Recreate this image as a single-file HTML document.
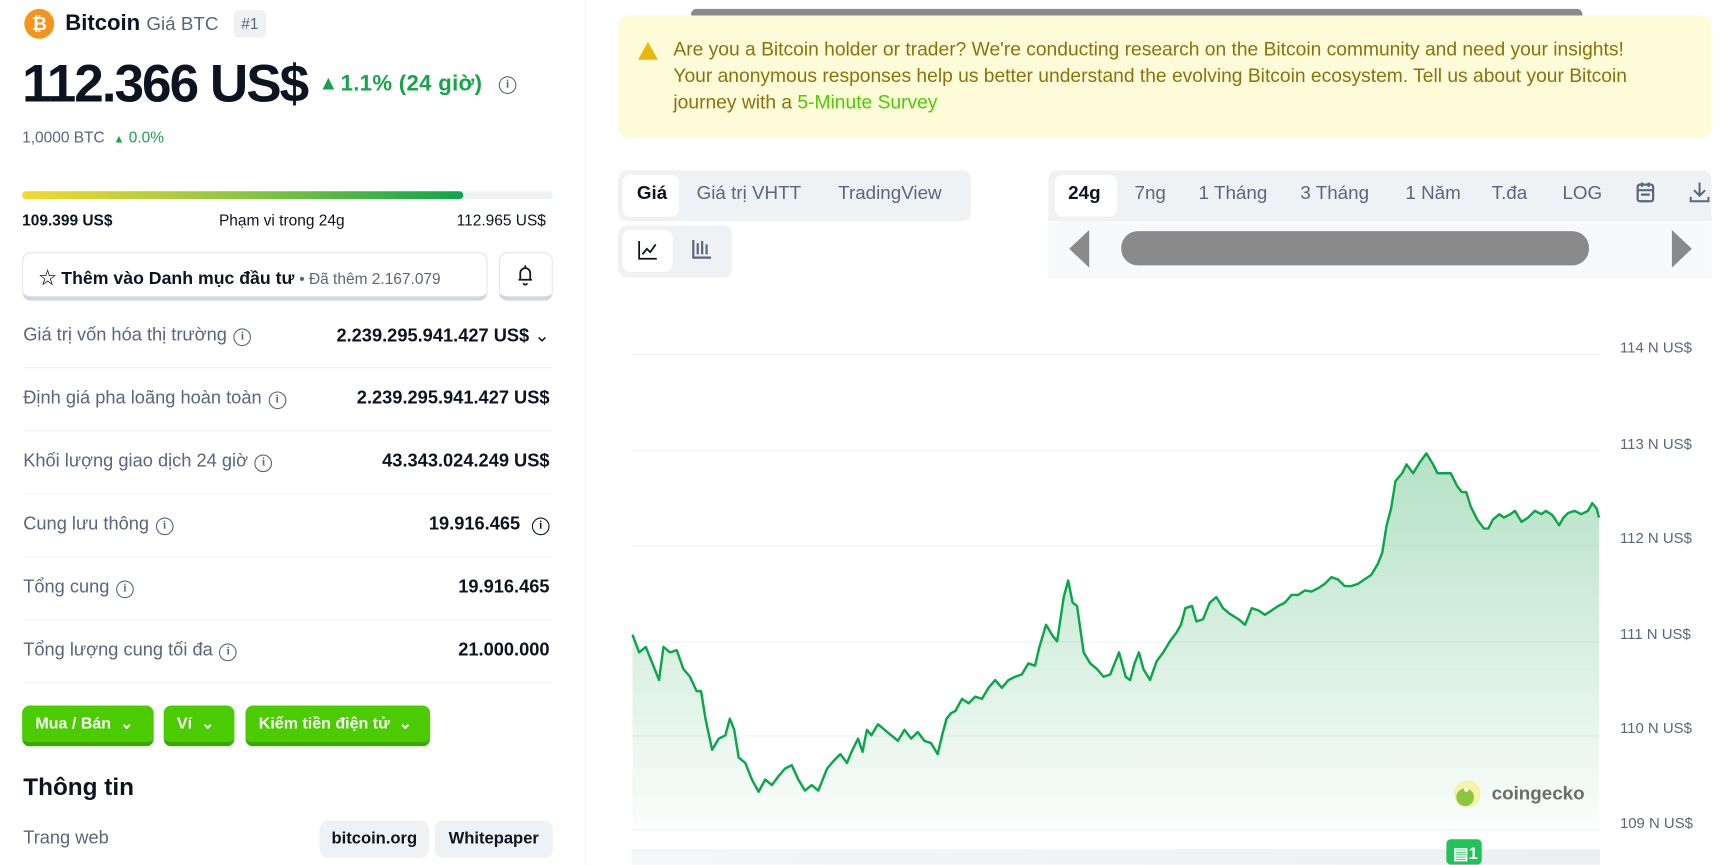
<!DOCTYPE html>
<html><head><meta charset="utf-8"><style>
*{margin:0;padding:0;box-sizing:border-box}
html,body{width:1725px;height:865px;overflow:hidden;background:#fff}
#w{position:absolute;left:0;top:0;width:1560px;height:782px;transform:scale(1.10577);transform-origin:0 0;font-family:"Liberation Sans","Noto Sans CJK JP",sans-serif;color:#0d1421}
.a{position:absolute;white-space:nowrap}
.row{position:absolute;left:21px;width:478px;height:57px;border-bottom:1px solid #eff2f5;font-size:16.5px}
.row .l{position:absolute;left:0;top:18px;color:#58667e}
.row .r{position:absolute;right:2px;top:18px;font-weight:bold;color:#0d1421}
.i{display:inline-block;width:16px;height:16px;border:1.5px solid #58667e;border-radius:50%;font-size:10px;line-height:13px;text-align:center;font-weight:bold;vertical-align:1px;margin-left:6px;color:#58667e;font-family:"Liberation Serif",serif}
.gb{position:absolute;top:638px;height:37px;background:#4bcc00;border-bottom:4px solid #3aa800;border-radius:7px;color:#fff;font-weight:bold;font-size:14.5px;padding:9px 12px 0}
.tab{position:absolute;font-size:17px;color:#58667e}
.grid{position:absolute;left:571px;width:876px;height:1px;background:#eff2f5}
.yl{position:absolute;left:1465px;font-size:13.5px;color:#58667e}
</style></head><body><div id="w">
<div class="a" style="left:529px;top:0;width:1px;height:782px;background:#eff2f5"></div>
<div class="a" style="left:22px;top:8px;width:27px;height:27px;border-radius:50%;background:#f7931a;color:#fff;font-weight:bold;font-size:17px;text-align:center;line-height:27px">₿</div>
<div class="a" style="left:59px;top:10px;font-size:20px;font-weight:bold">Bitcoin <span style="font-weight:normal;color:#58667e;font-size:17px">Giá BTC</span></div>
<div class="a" style="left:211px;top:9px;width:30px;height:25px;background:#eff2f5;border-radius:6px;font-size:14px;text-align:center;line-height:25px;color:#58667e">#1</div>
<div class="a" style="left:20px;top:49px;font-size:48px;font-weight:bold;letter-spacing:-1.8px">112.366 US$</div>
<div class="a" style="left:288px;top:65px;font-size:18px;font-weight:bold;color:#16a34a">▲</div>
<div class="a" style="left:308px;top:65px;font-size:20px;font-weight:bold;color:#16a34a;letter-spacing:0.3px">1.1% (24 giờ)</div>
<div class="a" style="left:451px;top:67px"><span class="i" style="margin:0">i</span></div>
<div class="a" style="left:20px;top:116px;font-size:14px;color:#58667e">1,0000 BTC <span style="color:#16a34a;font-size:10px;margin-left:4px">▲</span><span style="color:#16a34a"> 0.0%</span></div>
<div class="a" style="left:20px;top:173px;width:480px;height:7px;border-radius:4px;background:#eff2f5"></div>
<div class="a" style="left:20px;top:173px;width:399px;height:7px;border-radius:4px;background:linear-gradient(90deg,#f5d92e,#8cc63f 50%,#0aa64a)"></div>
<div class="a" style="left:20px;top:191px;font-size:14px;font-weight:bold;color:#0d1421">109.399 US$</div>
<div class="a" style="left:198px;top:191px;font-size:14px;color:#0d1421">Phạm vi trong 24g</div>
<div class="a" style="left:413px;top:191px;font-size:14px;color:#0d1421">112.965 US$</div>
<div class="a" style="left:20px;top:228px;width:421px;height:44px;border:1.5px solid #dfe3e8;border-bottom:4px solid #cfd6e4;border-radius:8px;padding:9px 0 0 14px;font-size:16px;font-weight:bold">☆ Thêm vào Danh mục đầu tư <span style="font-weight:normal;font-size:14px;color:#58667e">• Đã thêm 2.167.079</span></div>
<div class="a" style="left:451px;top:228px;width:49px;height:44px;border:1.5px solid #dfe3e8;border-bottom:4px solid #cfd6e4;border-radius:8px">
<svg width="46" height="38" viewBox="0 0 46 38"><path d="M17 24h12M18.5 24v-6a4.5 4.5 0 0 1 9 0v6M23 11v2M21.5 27a1.5 1.5 0 0 0 3 0" fill="none" stroke="#0d1421" stroke-width="1.6"/></svg></div>
<div class="row" style="top:276px"><span class="l">Giá trị vốn hóa thị trường<span class="i">i</span></span><span class="r">2.239.295.941.427 US$ <span style="font-weight:normal;color:#0d1421">⌄</span></span></div>
<div class="row" style="top:333px"><span class="l">Định giá pha loãng hoàn toàn<span class="i">i</span></span><span class="r">2.239.295.941.427 US$</span></div>
<div class="row" style="top:390px"><span class="l">Khối lượng giao dịch 24 giờ<span class="i">i</span></span><span class="r">43.343.024.249 US$</span></div>
<div class="row" style="top:447px"><span class="l">Cung lưu thông<span class="i">i</span></span><span class="r">19.916.465 <span class="i" style="border-color:#0d1421;color:#0d1421">i</span></span></div>
<div class="row" style="top:504px"><span class="l">Tổng cung<span class="i">i</span></span><span class="r">19.916.465</span></div>
<div class="row" style="top:561px"><span class="l">Tổng lượng cung tối đa<span class="i">i</span></span><span class="r">21.000.000</span></div>
<div class="gb" style="left:20px;width:119px">Mua / Bán &nbsp;⌄</div>
<div class="gb" style="left:148px;width:64px">Ví &nbsp;⌄</div>
<div class="gb" style="left:222px;width:167px">Kiếm tiền điện tử &nbsp;⌄</div>
<div class="a" style="left:21px;top:699px;font-size:22px;font-weight:bold">Thông tin</div>
<div class="a" style="left:21px;top:749px;font-size:16.5px;color:#58667e">Trang web</div>
<div class="a" style="left:289px;top:742px;width:99px;height:34px;background:#eff2f5;border-radius:8px;font-size:15px;font-weight:bold;text-align:center;line-height:34px">bitcoin.org</div>
<div class="a" style="left:393px;top:742px;width:107px;height:34px;background:#eff2f5;border-radius:8px;font-size:15px;font-weight:bold;text-align:center;line-height:34px">Whitepaper</div>
<div class="a" style="left:625px;top:8px;width:806px;height:10px;background:#8a8a8a;border-radius:5px"></div>
<div class="a" style="left:559px;top:14px;width:989px;height:111px;background:#fefbd8;border-radius:10px"></div>
<div class="a" style="left:577px;top:38px;width:0;height:0;border-left:9px solid transparent;border-right:9px solid transparent;border-bottom:16px solid #e7b80a"></div>
<div class="a" style="left:609px;top:32px;font-size:17.4px;line-height:24px;color:#8c720c;white-space:normal;width:880px">Are you a Bitcoin holder or trader? We're conducting research on the Bitcoin community and need your insights! Your anonymous responses help us better understand the evolving Bitcoin ecosystem. Tell us about your Bitcoin journey with a <span style="color:#4bcc00">5-Minute Survey</span></div>
<div class="a" style="left:559px;top:154px;width:319px;height:46px;background:#eff2f5;border-radius:8px"></div>
<div class="a" style="left:563px;top:158px;width:51px;height:38px;background:#fff;border-radius:7px"></div>
<div class="tab" style="left:576px;top:165px;color:#0d1421;font-weight:bold">Giá</div>
<div class="tab" style="left:630px;top:165px">Giá trị VHTT</div>
<div class="tab" style="left:758px;top:165px">TradingView</div>
<div class="a" style="left:559px;top:204px;width:103px;height:47px;background:#eff2f5;border-radius:8px"></div>
<div class="a" style="left:563px;top:208px;width:45px;height:38px;background:#fff;border-radius:7px"></div>
<svg class="a" style="left:576px;top:216px" width="20" height="20" viewBox="0 0 20 20"><path d="M2 2v16h16M5 14l4-5 3 3 5-7" fill="none" stroke="#0d1421" stroke-width="1.6"/></svg>
<svg class="a" style="left:625px;top:215px" width="20" height="20" viewBox="0 0 20 20"><path d="M2 2v16h16M6 5v10M10 3v12M14 6v9" fill="none" stroke="#58667e" stroke-width="2"/></svg>
<div class="a" style="left:948px;top:154px;width:600px;height:46px;background:#eff2f5;border-radius:8px 8px 0 0"></div>
<div class="a" style="left:954px;top:158px;width:56px;height:38px;background:#fff;border-radius:7px"></div>
<div class="tab" style="left:966px;top:165px;color:#0d1421;font-weight:bold">24g</div>
<div class="tab" style="left:1026px;top:165px">7ng</div>
<div class="tab" style="left:1084px;top:165px">1 Tháng</div>
<div class="tab" style="left:1176px;top:165px">3 Tháng</div>
<div class="tab" style="left:1271px;top:165px">1 Năm</div>
<div class="tab" style="left:1349px;top:165px">T.đa</div>
<div class="tab" style="left:1413px;top:165px">LOG</div>
<svg class="a" style="left:1479px;top:164px" width="18" height="20" viewBox="0 0 18 20"><rect x="2" y="3" width="14" height="15" rx="2" fill="none" stroke="#58667e" stroke-width="2"/><path d="M2 8h14M6 1v4M12 1v4M5 12h8" stroke="#58667e" stroke-width="2"/></svg>
<svg class="a" style="left:1527px;top:163px" width="20" height="22" viewBox="0 0 20 22"><path d="M10 2v12M5 9l5 5 5-5M2 15v4h16v-4" fill="none" stroke="#58667e" stroke-width="1.8"/></svg>
<div class="a" style="left:948px;top:200px;width:600px;height:52px;background:#f8f9fa"></div>
<div class="a" style="left:1014px;top:209px;width:423px;height:31px;background:#8a8a8a;border-radius:15px"></div>
<div class="a" style="left:967px;top:208px;width:0;height:0;border-top:17px solid transparent;border-bottom:17px solid transparent;border-right:18px solid #8a8a8a"></div>
<div class="a" style="left:1512px;top:208px;width:0;height:0;border-top:17px solid transparent;border-bottom:17px solid transparent;border-left:18px solid #8a8a8a"></div>
<div class="grid" style="top:320px"></div><div class="grid" style="top:407px"></div><div class="grid" style="top:493px"></div><div class="grid" style="top:580px"></div><div class="grid" style="top:665px"></div><div class="grid" style="top:750px"></div>
<div class="yl" style="top:307px">114 N US$</div><div class="yl" style="top:394px">113 N US$</div><div class="yl" style="top:479px">112 N US$</div><div class="yl" style="top:566px">111 N US$</div><div class="yl" style="top:651px">110 N US$</div><div class="yl" style="top:737px">109 N US$</div>
<div class="a" style="left:571px;top:768px;width:876px;height:14px;background:linear-gradient(90deg,#f5f6f8,#eceef1)"></div>
<svg class="a" style="left:0;top:0" width="1560" height="782" viewBox="0 0 1560 782">
<defs><linearGradient id="g" x1="0" y1="0" x2="0" y2="1"><stop offset="0" stop-color="#16a34a" stop-opacity=".32"/><stop offset="1" stop-color="#16a34a" stop-opacity=".02"/></linearGradient></defs>
<path d="M572,574 578,590 584,585 590,600 596,615 600,585 606,590 612,588 618,605 624,612 630,625 634,625 638,650 644,678 650,668 656,665 660,650 664,660 668,685 674,690 680,705 686,716 692,705 698,710 704,702 710,695 716,692 722,705 728,715 734,710 740,715 744,705 748,695 754,688 760,682 766,690 770,680 776,668 780,680 784,660 788,665 794,655 800,660 806,665 812,670 818,660 824,668 830,662 836,670 842,672 848,682 852,665 856,650 860,645 864,643 870,632 876,636 882,630 888,632 894,622 900,615 906,622 912,615 918,612 924,610 930,600 936,602 940,585 946,565 952,575 956,580 962,540 966,525 970,545 974,548 980,590 986,600 992,605 998,612 1004,610 1008,600 1012,590 1018,612 1022,615 1026,600 1030,590 1034,605 1040,615 1046,598 1052,590 1058,580 1064,572 1068,565 1072,550 1078,548 1082,562 1088,560 1094,545 1100,540 1106,550 1112,555 1120,560 1126,565 1132,550 1138,552 1144,556 1150,552 1156,548 1162,545 1168,538 1174,538 1180,534 1186,535 1192,532 1198,528 1204,522 1210,524 1216,530 1222,530 1228,528 1234,524 1240,520 1246,510 1250,500 1254,475 1258,460 1262,435 1268,428 1272,420 1278,428 1284,418 1290,410 1296,420 1300,428 1306,428 1312,428 1318,440 1322,445 1326,445 1330,458 1336,470 1342,478 1346,478 1350,470 1356,465 1360,468 1366,465 1370,462 1376,472 1382,468 1388,462 1394,465 1398,462 1404,466 1410,475 1414,468 1418,464 1424,462 1430,465 1436,462 1440,455 1444,460 1446,468" fill="none" stroke="#0aa64a" stroke-width="2.2" stroke-linejoin="round"/>
<path d="M572,574 578,590 584,585 590,600 596,615 600,585 606,590 612,588 618,605 624,612 630,625 634,625 638,650 644,678 650,668 656,665 660,650 664,660 668,685 674,690 680,705 686,716 692,705 698,710 704,702 710,695 716,692 722,705 728,715 734,710 740,715 744,705 748,695 754,688 760,682 766,690 770,680 776,668 780,680 784,660 788,665 794,655 800,660 806,665 812,670 818,660 824,668 830,662 836,670 842,672 848,682 852,665 856,650 860,645 864,643 870,632 876,636 882,630 888,632 894,622 900,615 906,622 912,615 918,612 924,610 930,600 936,602 940,585 946,565 952,575 956,580 962,540 966,525 970,545 974,548 980,590 986,600 992,605 998,612 1004,610 1008,600 1012,590 1018,612 1022,615 1026,600 1030,590 1034,605 1040,615 1046,598 1052,590 1058,580 1064,572 1068,565 1072,550 1078,548 1082,562 1088,560 1094,545 1100,540 1106,550 1112,555 1120,560 1126,565 1132,550 1138,552 1144,556 1150,552 1156,548 1162,545 1168,538 1174,538 1180,534 1186,535 1192,532 1198,528 1204,522 1210,524 1216,530 1222,530 1228,528 1234,524 1240,520 1246,510 1250,500 1254,475 1258,460 1262,435 1268,428 1272,420 1278,428 1284,418 1290,410 1296,420 1300,428 1306,428 1312,428 1318,440 1322,445 1326,445 1330,458 1336,470 1342,478 1346,478 1350,470 1356,465 1360,468 1366,465 1370,462 1376,472 1382,468 1388,462 1394,465 1398,462 1404,466 1410,475 1414,468 1418,464 1424,462 1430,465 1436,462 1440,455 1444,460 1446,468 1446,750 572,750Z" fill="url(#g)"/>
<circle cx="1327" cy="718" r="12" fill="#f6f2a6"/><circle cx="1325" cy="721" r="8" fill="#8dc63f"/><circle cx="1326" cy="714" r="2" fill="#fff"/>
<text x="1349" y="723" font-family="Liberation Sans,sans-serif" font-size="17" font-weight="bold" fill="#6b6b6b">coingecko</text>
<rect x="1308" y="759" width="32" height="23" rx="4" fill="#20c35a"/>
<text x="1314" y="777" font-family="Liberation Sans,sans-serif" font-size="15" font-weight="bold" fill="#fff">▤1</text>
</svg>
</div></body></html>
